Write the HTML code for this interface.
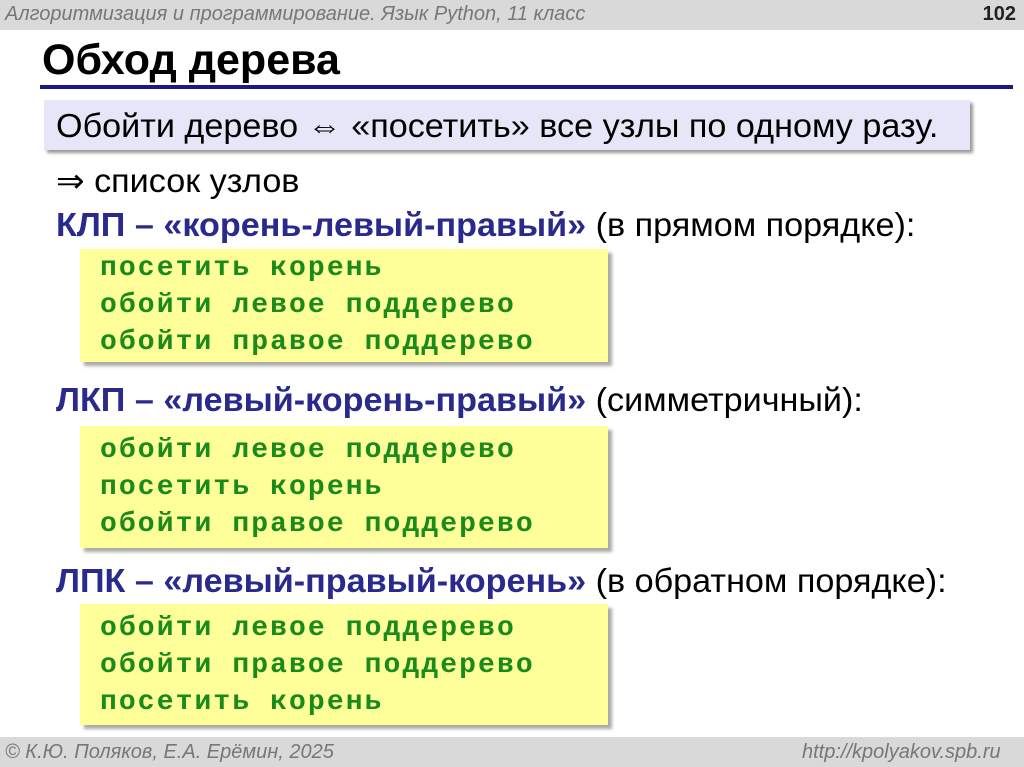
<!DOCTYPE html>
<html><head><meta charset="utf-8"><style>
body{margin:0;width:1024px;height:767px;position:relative;background:#fff;font-family:"Liberation Sans",sans-serif;overflow:hidden}
.a{position:absolute;white-space:nowrap;transform-origin:0 0}
.hdr{left:0;top:0;width:1024px;height:30px;background:#d9d9d9}
.ftr{left:0;top:737px;width:1024px;height:30px;background:#d9d9d9}
.gi{font-style:italic;color:#777;font-size:20px}
.box{background:#ffff99;box-shadow:4px 4px 3px #aaa}
.code{font-family:"Liberation Mono",monospace;font-weight:bold;color:#1a8a1a;font-size:28px;letter-spacing:2.1px;line-height:37px}
.h{font-size:33px;color:#000;transform:scaleX(1.035)}
.h b{color:#2a2a8c}
</style></head><body>
<div class="a hdr"></div>
<div class="a gi" style="left:5px;top:3px">Алгоритмизация и программирование. Язык Python, 11 класс</div>
<div class="a" style="right:8px;top:3px;font-weight:bold;font-size:20px;color:#222">102</div>
<div class="a" style="left:42px;top:36px;font-size:43px;font-weight:bold">Обход дерева</div>
<div class="a" style="left:40px;top:85px;width:973px;height:4px;background:#1a1a80"></div>
<div class="a" style="left:44px;top:100px;width:926px;height:50px;background:#e6e6f8;box-shadow:3px 3px 3px #999"></div>
<div class="a h" style="left:56px;top:107px">Обойти дерево ⇔ «посетить» все узлы по одному разу.</div>
<div class="a h" style="left:56px;top:161px">⇒ список узлов</div>
<div class="a h" style="left:56px;top:206px"><b>КЛП – «корень-левый-правый»</b> (в прямом порядке):</div>
<div class="a box" style="left:80px;top:249px;width:528px;height:113px"></div>
<div class="a code" style="left:100px;top:250px">посетить корень<br>обойти левое поддерево<br>обойти правое поддерево</div>
<div class="a h" style="left:56px;top:381px"><b>ЛКП – «левый-корень-правый»</b> (симметричный):</div>
<div class="a box" style="left:80px;top:426px;width:528px;height:122px"></div>
<div class="a code" style="left:100px;top:432px">обойти левое поддерево<br>посетить корень<br>обойти правое поддерево</div>
<div class="a h" style="left:56px;top:562px"><b>ЛПК – «левый-правый-корень»</b> (в обратном порядке):</div>
<div class="a box" style="left:80px;top:604px;width:528px;height:121px"></div>
<div class="a code" style="left:100px;top:610px">обойти левое поддерево<br>обойти правое поддерево<br>посетить корень</div>
<div class="a ftr"></div>
<div class="a gi" style="left:5px;top:741px">© К.Ю. Поляков, Е.А. Ерёмин, 2025</div>
<div class="a gi" style="left:802px;top:741px">http://kpolyakov.spb.ru</div>
</body></html>
